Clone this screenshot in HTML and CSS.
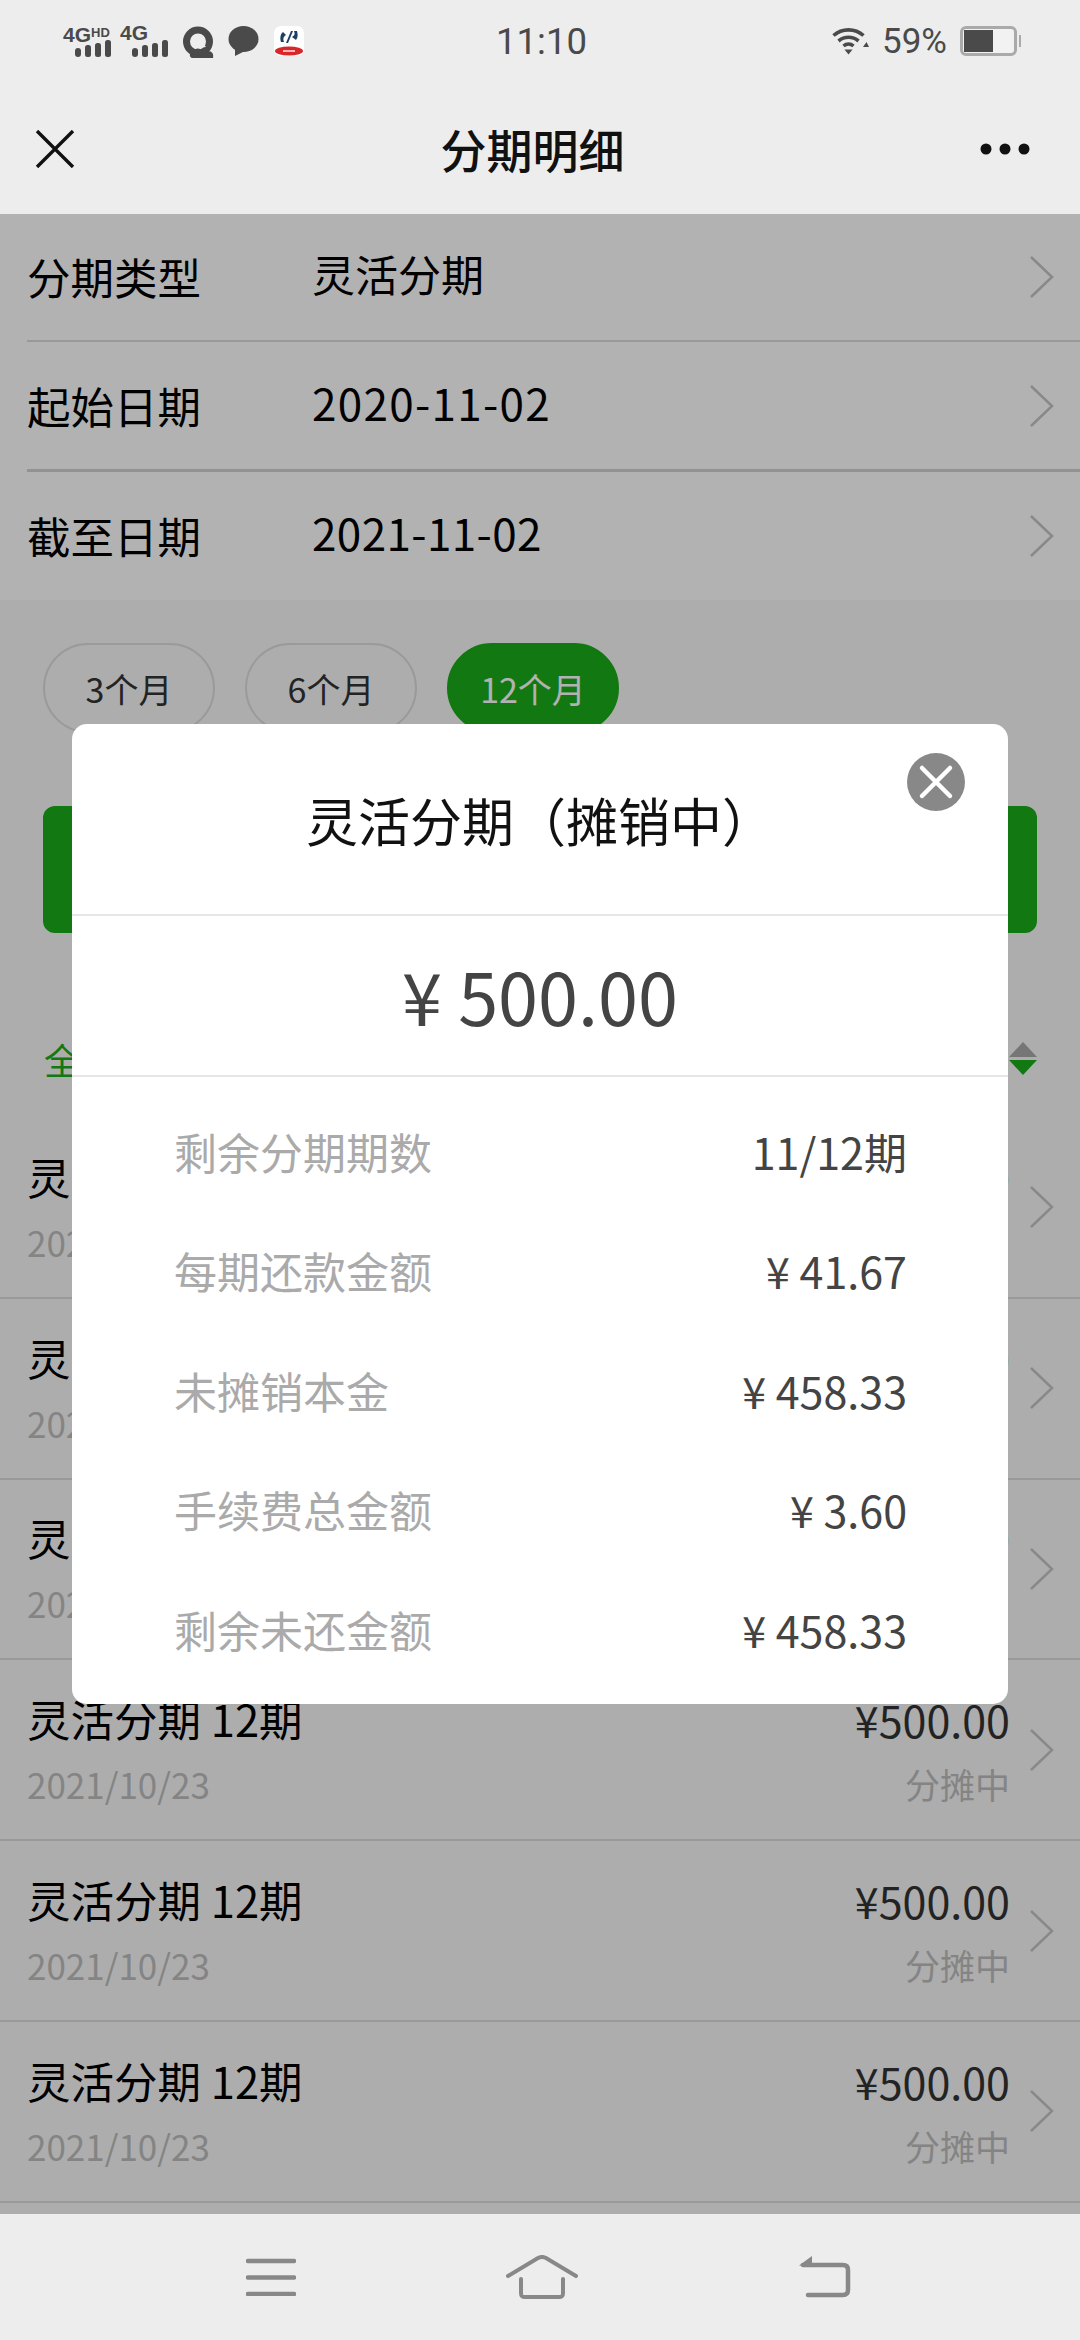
FILE: index.html
```html
<!DOCTYPE html>
<html lang="zh-CN">
  <head>
    <meta charset="UTF-8" />
    <meta name="viewport" content="width=device-width, initial-scale=1.0" />
    <title>分期明细</title>
    <link rel="stylesheet" href="styles.css">
  </head>
  <body>
    <div class="phone">
      <div class="status-bar">
        <div class="status-left">
          <div class="signal">
            <div class="signal-label">4G<span class="signal-hd">HD</span></div>
            <svg class="signal-bars" width="36" height="17" viewBox="0 0 36 17" fill="#4a4a4a">
              <rect x="0" y="8" width="6" height="9" rx="3" />
              <rect x="10" y="5" width="6" height="12" rx="2.5" />
              <rect x="20" y="3" width="6" height="14" rx="2.5" />
              <rect x="30" y="0" width="6" height="17" rx="2.5" />
            </svg>
          </div>
          <div class="signal">
            <div class="signal-label">4G</div>
            <svg class="signal-bars" width="36" height="17" viewBox="0 0 36 17" fill="#4a4a4a">
              <rect x="0" y="8" width="6" height="9" rx="3" />
              <rect x="10" y="5" width="6" height="12" rx="2.5" />
              <rect x="20" y="3" width="6" height="14" rx="2.5" />
              <rect x="30" y="0" width="6" height="17" rx="2.5" />
            </svg>
          </div>
          <svg class="status-icon" width="31" height="32" viewBox="0 0 31 32">
            <circle cx="15" cy="15.5" r="11.5" fill="none" stroke="#4a4a4a" stroke-width="7" />
            <path d="M9 32c-3-1-3-6 1-6 1-4 7-5 9-1 1-3 5-3 6 0 4 0 6 3 5 7z" fill="#4a4a4a" />
            <path d="M14 22l5-6 4 5z" fill="#ededed" />
          </svg>
          <svg class="status-icon status-bubble" width="31" height="30" viewBox="0 0 31 30" fill="#4a4a4a">
            <ellipse cx="15.5" cy="13" rx="15" ry="13" />
            <path d="M7 22v8l10-5z" />
          </svg>
          <svg class="status-icon status-app" width="30" height="30" viewBox="0 0 30 30">
            <rect width="30" height="30" rx="7" fill="#fff" />
            <path d="M9 6c-3 2-3 7-2 10h3c-1-3-1-5 2-7z M22 14c2-3 2-5 1-9h-3c1 3 1 4-2 6z" fill="#1d3f66" />
            <path d="M17 5l-5 12h2l5-12z" fill="#1d3f66" />
            <ellipse cx="15" cy="25" rx="14" ry="4.5" fill="#d9262a" />
            <rect x="9" y="24" width="12" height="2" fill="#f4b5b5" />
          </svg>
        </div>
        <div class="status-time">11:10</div>
        <div class="status-right">
          <svg width="37" height="28" viewBox="0 0 37 28" fill="none" stroke="#4a4a4a" stroke-width="3.6">
            <path d="M1.5 8.5C10 1 23 1 31.5 8.5" />
            <path d="M6.5 14c6-5 14-5 20 0" />
            <path d="M11.5 19c3-2.600 7-2.600 10 0" />
            <path d="M12.500 22.500h8l-4 5z" fill="#4a4a4a" stroke="none" />
            <path d="M31 20l3.500-5 2.500 5z" fill="#4a4a4a" stroke="none" />
          </svg>
          <span class="status-percent">59%</span>
          <div class="battery">
            <div class="battery-fill"></div>
          </div>
        </div>
      </div>

      <div class="nav-bar">
        <svg width="40" height="38" viewBox="0 0 40 38" fill="none" stroke="#111" stroke-width="3.4">
          <path d="M2 1l36 36M38 1L2 37" />
        </svg>
        <div class="nav-title">分期明细</div>
        <svg width="50" height="12" viewBox="0 0 50 12" fill="#111">
          <circle cx="6" cy="6" r="5.500" />
          <circle cx="25" cy="6" r="5.500" />
          <circle cx="44" cy="6" r="5.500" />
        </svg>
      </div>

      <div class="content">
        <div class="form">
          <div class="form-row">
            <span class="form-label">分期类型</span>
            <span class="form-value">灵活分期</span>
            <svg class="chevron" width="24" height="42" viewBox="0 0 24 42" fill="none"><path d="M1 1l21 20L1 41" /></svg>
          </div>
          <div class="form-row form-row-thick">
            <span class="form-label">起始日期</span>
            <span class="form-value form-date">2020-11-02</span>
            <svg class="chevron" width="24" height="42" viewBox="0 0 24 42" fill="none"><path d="M1 1l21 20L1 41" /></svg>
          </div>
          <div class="form-row form-row-last">
            <span class="form-label">截至日期</span>
            <span class="form-value form-date form-date-end">2021-11-02</span>
            <svg class="chevron" width="24" height="42" viewBox="0 0 24 42" fill="none"><path d="M1 1l21 20L1 41" /></svg>
          </div>
        </div>

        <div class="pills">
          <div class="pill">3个月</div>
          <div class="pill">6个月</div>
          <div class="pill pill-active">12个月</div>
        </div>

        <div class="big-btn"></div>

        <div class="filter">
          <span class="filter-all">全部</span>
          <div class="sort">
            <div class="sort-up"></div>
            <div class="sort-down"></div>
          </div>
        </div>

        <div class="list">
          <div class="list-row">
            <div class="list-main">
              <span class="list-title">灵活分期 12期</span>
              <span class="list-amount">¥500.00</span>
              <span class="list-date">2021/10/23</span>
              <span class="list-state">分摊中</span>
            </div>
            <svg class="chevron" width="24" height="42" viewBox="0 0 24 42" fill="none"><path d="M1 1l21 20L1 41" /></svg>
          </div>
          <div class="list-row">
            <div class="list-main">
              <span class="list-title">灵活分期 12期</span>
              <span class="list-amount">¥500.00</span>
              <span class="list-date">2021/10/23</span>
              <span class="list-state">分摊中</span>
            </div>
            <svg class="chevron" width="24" height="42" viewBox="0 0 24 42" fill="none"><path d="M1 1l21 20L1 41" /></svg>
          </div>
          <div class="list-row">
            <div class="list-main">
              <span class="list-title">灵活分期 12期</span>
              <span class="list-amount">¥500.00</span>
              <span class="list-date">2021/10/23</span>
              <span class="list-state">分摊中</span>
            </div>
            <svg class="chevron" width="24" height="42" viewBox="0 0 24 42" fill="none"><path d="M1 1l21 20L1 41" /></svg>
          </div>
          <div class="list-row">
            <div class="list-main">
              <span class="list-title">灵活分期 12期</span>
              <span class="list-amount">¥500.00</span>
              <span class="list-date">2021/10/23</span>
              <span class="list-state">分摊中</span>
            </div>
            <svg class="chevron" width="24" height="42" viewBox="0 0 24 42" fill="none"><path d="M1 1l21 20L1 41" /></svg>
          </div>
          <div class="list-row">
            <div class="list-main">
              <span class="list-title">灵活分期 12期</span>
              <span class="list-amount">¥500.00</span>
              <span class="list-date">2021/10/23</span>
              <span class="list-state">分摊中</span>
            </div>
            <svg class="chevron" width="24" height="42" viewBox="0 0 24 42" fill="none"><path d="M1 1l21 20L1 41" /></svg>
          </div>
          <div class="list-row">
            <div class="list-main">
              <span class="list-title">灵活分期 12期</span>
              <span class="list-amount">¥500.00</span>
              <span class="list-date">2021/10/23</span>
              <span class="list-state">分摊中</span>
            </div>
            <svg class="chevron" width="24" height="42" viewBox="0 0 24 42" fill="none"><path d="M1 1l21 20L1 41" /></svg>
          </div>
        </div>

        <div class="overlay">
          <div class="modal">
            <div class="modal-head">
              灵活分期（摊销中）
              <div class="modal-close">
                <svg width="58" height="58" viewBox="0 0 58 58" fill="none" stroke="#fff" stroke-width="4.500" stroke-linecap="round">
                  <path d="M15 15l28 28M43 15L15 43" />
                </svg>
              </div>
            </div>
            <div class="modal-amount">¥ 500.00</div>
            <div class="modal-rows">
              <div class="modal-row"><span class="modal-label">剩余分期期数</span><span>11/12期</span></div>
              <div class="modal-row"><span class="modal-label">每期还款金额</span><span>¥ 41.67</span></div>
              <div class="modal-row"><span class="modal-label">未摊销本金</span><span>¥ 458.33</span></div>
              <div class="modal-row"><span class="modal-label">手续费总金额</span><span>¥ 3.60</span></div>
              <div class="modal-row"><span class="modal-label">剩余未还金额</span><span>¥ 458.33</span></div>
            </div>
          </div>
        </div>
      </div>

      <div class="bottom-bar">
        <svg width="50" height="38" viewBox="0 0 50 38" fill="none" stroke="#888" stroke-width="4.500" stroke-linecap="round">
          <path d="M2 3h46M2 19.500h46M2 36h46" />
        </svg>
        <svg class="bottom-home" width="72" height="44" viewBox="0 0 72 44" fill="none" stroke="#888" stroke-width="4" stroke-linecap="round">
          <path d="M2 21L32 3c2.500-1.300 5.500-1.300 8 0l30 18" />
          <path d="M15 24v14c0 3 1 4 4 4h34c3 0 4-1 4-4V24" />
        </svg>
        <svg class="bottom-back" width="52" height="42" viewBox="0 0 52 42" fill="none" stroke="#888" stroke-width="4.500" stroke-linecap="round">
          <path d="M4 9h40c3 0 5 1 5 5v20c0 4-2 5-5 5H9" />
          <path d="M0 9.500L13 0v11z" fill="#888" stroke="none" />
        </svg>
      </div>
    </div>
  </body>
</html>
```

FILE: styles.css
```css
* {
  box-sizing: border-box;
}

body {
  margin: 0;
  font-family: "Noto Sans CJK SC", sans-serif;
  color: #000;
}

.phone {
  width: 1080px;
  height: 2340px;
  display: flex;
  flex-direction: column;
  overflow: hidden;
  background-color: #ededed;
}

/* status bar */
.status-bar {
  height: 84px;
  padding: 24px 60px 0 63px;
  display: grid;
  grid-template-columns: 1fr auto 1fr;
  align-items: flex-start;
  color: #4a4a4a;
}

.status-left {
  display: flex;
  align-items: flex-start;
}

.signal {
  width: 57px;
}

.signal-label {
  height: 16px;
  font-family: "Liberation Sans", sans-serif;
  font-size: 21px;
  line-height: 17px;
  font-weight: 700;
  white-space: nowrap;
}

.signal-hd {
  font-size: 13px;
  vertical-align: 5px;
}

.signal-bars {
  display: block;
  margin-left: 12px;
}

.status-icon {
  display: block;
  margin-top: 2px;
  margin-left: 6px;
  flex-shrink: 0;
}

.status-bubble {
  margin-left: 14px;
}

.status-app {
  margin-left: 15px;
}

.status-time {
  font-family: Roboto, sans-serif;
  font-size: 36.500px;
  line-height: 36px;
}

.status-right {
  display: flex;
  align-items: center;
  justify-content: flex-end;
  height: 34px;
}

.status-percent {
  font-family: Roboto, sans-serif;
  font-size: 35px;
  margin-left: 13px;
  margin-right: 13px;
}

.battery {
  position: relative;
  width: 57px;
  height: 30px;
  border: 3px solid #aaa;
  border-radius: 6px;
  background-color: #f2f2f2;
  padding: 1px;
  margin-right: 3px;
}

.battery::after {
  content: "";
  position: absolute;
  right: -7px;
  top: 6px;
  width: 2px;
  height: 12px;
  background-color: #aaa;
}

.battery-fill {
  width: 29px;
  height: 100%;
  background-color: #4a4a4a;
}

/* nav */
.nav-bar {
  height: 130px;
  padding: 0 50px 0 35px;
  display: flex;
  justify-content: space-between;
  align-items: center;
}

.nav-title {
  font-size: 46px;
  font-weight: 500;
  color: #111;
  margin-left: 10px;
  margin-top: -2px;
}

/* page under the dialog */
.content {
  position: relative;
  flex: 1;
  overflow: hidden;
  background-color: #f8f8f8;
}

.form {
  height: 386px;
  display: grid;
  grid-template-rows: 128px 130px 128px;
  background-color: #fff;
}

.form-row {
  margin-left: 27px;
  padding-right: 26px;
  display: flex;
  align-items: center;
  border-bottom: 2px solid #dcdcdc;
}

.form-row-thick {
  border-bottom-color: #d2d2d2;
  border-bottom-width: 3px;
}

.form-row-last {
  border-bottom: none;
}

.form-label {
  width: 285px;
  font-size: 43.500px;
  line-height: 60px;
}

.form-value {
  font-size: 43px;
  line-height: 60px;
  margin-bottom: 8px;
}

.form-date {
  font-size: 44px;
  letter-spacing: 1.300px;
}

.form-date-end {
  letter-spacing: 0.400px;
}

.chevron {
  margin-left: auto;
  flex-shrink: 0;
  stroke: #c4c4c4;
  stroke-width: 2.500;
}

.pills {
  margin-top: 43px;
  padding-left: 43px;
  display: flex;
  gap: 30px;
}

.pill {
  width: 172px;
  height: 90px;
  border: 2px solid #ddd;
  border-radius: 45px;
  display: flex;
  align-items: center;
  justify-content: center;
  font-size: 34px;
  color: #333;
}

.pill-active {
  background-color: #1aad19;
  border-color: #1aad19;
  color: #fff;
}

.big-btn {
  margin: 73px 43px 0;
  height: 127px;
  border-radius: 12px;
  background-color: #1aad19;
}

.filter {
  height: 185px;
  padding: 66px 43px 0 44px;
  display: flex;
  justify-content: space-between;
  align-items: center;
}

.filter-all {
  font-size: 36px;
  color: #1aad19;
}

.sort {
  display: flex;
  flex-direction: column;
  gap: 3px;
}

.sort-up,
.sort-down {
  width: 0;
  height: 0;
  border-left: 14px solid transparent;
  border-right: 14px solid transparent;
}

.sort-up {
  border-bottom: 15px solid #aaa;
}

.sort-down {
  border-top: 15px solid #1aad19;
}

.list-row {
  height: 180.800px;
  padding: 0 26px 0 27px;
  display: flex;
  align-items: center;
  border-bottom: 2px solid #dcdcdc;
}

.list-main {
  flex: 1;
  padding-top: 4px;
  display: grid;
  grid-template-columns: 1fr auto;
  row-gap: 5px;
}

.list-title {
  font-size: 43.500px;
  line-height: 60px;
}

.list-amount {
  font-size: 43px;
  line-height: 60px;
  color: #333;
  text-align: right;
}

.list-date {
  font-size: 35px;
  line-height: 60px;
  color: #bebebe;
}

.list-state {
  font-size: 35px;
  line-height: 60px;
  color: #bebebe;
  text-align: right;
}

.list-row .chevron {
  margin-left: 20px;
}

/* dialog */
.overlay {
  position: absolute;
  top: 0;
  left: 0;
  width: 100%;
  height: 100%;
  background-color: rgba(0, 0, 0, 0.3);
  display: flex;
  align-items: center;
  justify-content: center;
}

.modal {
  width: 936px;
  height: 980px;
  background-color: #fff;
  border-radius: 15px;
  display: flex;
  flex-direction: column;
}

.modal-head {
  position: relative;
  height: 192px;
  padding-top: 57px;
  font-size: 52px;
  line-height: 78px;
  text-align: center;
  color: #111;
  border-bottom: 2px solid #e6e6e6;
}

.modal-close {
  position: absolute;
  top: 29px;
  right: 43px;
  width: 58px;
  height: 58px;
  border-radius: 50%;
  background-color: #888;
}

.modal-close svg {
  display: block;
}

.modal-amount {
  height: 161px;
  padding-bottom: 2px;
  display: flex;
  align-items: center;
  justify-content: center;
  font-size: 72px;
  color: #444;
  border-bottom: 2px solid #e6e6e6;
}

.modal-rows {
  padding: 14px 101px 0 102px;
}

.modal-row {
  height: 119.500px;
  display: flex;
  align-items: center;
  justify-content: space-between;
  font-size: 43px;
  color: #444;
}

.modal-label {
  color: #aaa;
}

/* bottom nav */
.bottom-bar {
  height: 126px;
  padding-left: 246px;
  display: flex;
  align-items: center;
  background-color: #ededed;
}

.bottom-home {
  margin-left: 210px;
}

.bottom-back {
  margin-left: 221px;
}
```
